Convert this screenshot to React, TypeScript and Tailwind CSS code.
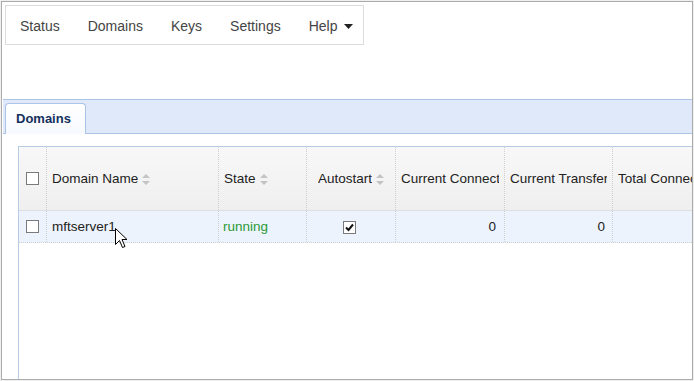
import React from "react";

const SortIcon = () => (
  <svg width="8" height="11" viewBox="0 0 8 11" className="ml-[4px] shrink-0">
    <path d="M4 0 L8 4 L0 4 Z" fill="#c4c4c4" />
    <path d="M4 11 L8 7 L0 7 Z" fill="#c4c4c4" />
  </svg>
);

const Check = ({ checked = false }: { checked?: boolean }) => (
  <div className="w-[13px] h-[13px] border border-[#7a7a7a] bg-white flex items-center justify-center shrink-0">
    {checked && (
      <svg width="11" height="11" viewBox="0 0 11 11">
        <path d="M2 5.5 L4.5 8 L9 2.5" stroke="#111" strokeWidth="2" fill="none" />
      </svg>
    )}
  </div>
);

const Cursor = () => (
  <svg
    width="13"
    height="21"
    viewBox="0 0 13 21"
    className="absolute left-[113px] top-[226px]"
  >
    <path
      d="M0.5 0.5 L0.5 16.5 L4.5 12.5 L7.5 19.5 L10 18.5 L7 11.5 L12 11.5 Z"
      fill="#fff"
      stroke="#000"
      strokeWidth="1"
    />
  </svg>
);

const navItems = ["Status", "Domains", "Keys", "Settings"];

const columns = [
  { key: "name", label: "Domain Name", w: "w-[172px]", sort: true, align: "left" },
  { key: "state", label: "State", w: "w-[88px]", sort: true, align: "left" },
  { key: "auto", label: "Autostart", w: "w-[89px]", sort: true, align: "center" },
  { key: "cc", label: "Current Connections", w: "w-[109px]", sort: false, align: "left" },
  { key: "ct", label: "Current Transfers", w: "w-[108px]", sort: false, align: "left" },
  { key: "tc", label: "Total Connections", w: "w-[108px]", sort: false, align: "left" },
];

export default function App() {
  return (
    <div
      className="w-[694px] h-[381px] bg-[#efefef] pl-[1px] pt-[1px] overflow-hidden"
      style={{ fontFamily: '"Liberation Sans", Arial, sans-serif' }}
    >
      <div className="relative w-[692px] h-[379px] bg-white border border-[#ababab] overflow-hidden">
        {/* top nav */}
        <div className="ml-[3px] mt-[3px] w-[359px] h-[40px] border border-[#dcdcdc] flex items-center pt-[3px] text-[14px] text-[#444]">
          {navItems.map((n) => (
            <span key={n} className="px-[14px]">
              {n}
            </span>
          ))}
          <span className="pl-[14px] pr-[12px] flex items-center">
            Help
            <svg width="9" height="5" viewBox="0 0 9 5" className="ml-[7px]">
              <path d="M0 0 L9 0 L4.5 5 Z" fill="#222" />
            </svg>
          </span>
        </div>

        {/* tab strip */}
        <div className="mt-[54px] ml-[1px] h-[35px] bg-[#dfe9f9] border-t border-b border-[#a9c4e4] flex items-end pl-[2px]">
          <div className="w-[81px] h-[31px] -mb-[1px] bg-gradient-to-b from-white to-[#f6f9fe] border border-b-0 border-[#a9c4e4] rounded-t-[4px] flex items-center pl-[10px] text-[13px] font-bold text-[#15305c]">
            Domains
          </div>
        </div>

        {/* grid */}
        <div className="ml-[16px] mt-[12px] h-[300px] border-l border-t border-[#b7cbe6] text-[13.5px] text-[#222]">
          <div className="flex h-[64px] bg-gradient-to-b from-[#f8f8f8] to-[#efefef] border-b border-[#dedede]">
            <div className="w-[28px] shrink-0 border-r border-dotted border-[#cfcfcf] flex items-center pl-[7px]">
              <Check />
            </div>
            {columns.map((c) => (
              <div
                key={c.key}
                className={`${c.w} shrink-0 border-r border-dotted border-[#cfcfcf] flex items-center pt-[2px] px-[5px] overflow-hidden whitespace-nowrap ${
                  c.align === "center" ? "justify-center" : ""
                }`}
              >
                <span className="overflow-hidden">{c.label}</span>
                {c.sort && <SortIcon />}
              </div>
            ))}
          </div>
          <div className="flex h-[32px] bg-[#edf3fc] border-b border-dotted border-[#cfcfcf]">
            <div className="w-[28px] shrink-0 border-r border-dotted border-[#cfcfcf] flex items-center pl-[7px]">
              <Check />
            </div>
            <div className="w-[172px] shrink-0 border-r border-dotted border-[#cfcfcf] flex items-center pt-[2px] px-[5px]">
              mftserver1
            </div>
            <div className="w-[88px] shrink-0 border-r border-dotted border-[#cfcfcf] flex items-center pt-[2px] px-[4px] text-[#2a9a35]">
              running
            </div>
            <div className="w-[89px] shrink-0 border-r border-dotted border-[#cfcfcf] flex items-center justify-center pt-[2px] pr-[4px]">
              <Check checked />
            </div>
            <div className="w-[109px] shrink-0 border-r border-dotted border-[#cfcfcf] flex items-center justify-end pt-[2px] pr-[8px]">
              0
            </div>
            <div className="w-[108px] shrink-0 border-r border-dotted border-[#cfcfcf] flex items-center justify-end pt-[2px] pr-[7px]">
              0
            </div>
            <div className="w-[108px] shrink-0 border-r border-dotted border-[#cfcfcf]" />
          </div>
        </div>

        <Cursor />
      </div>
    </div>
  );
}
